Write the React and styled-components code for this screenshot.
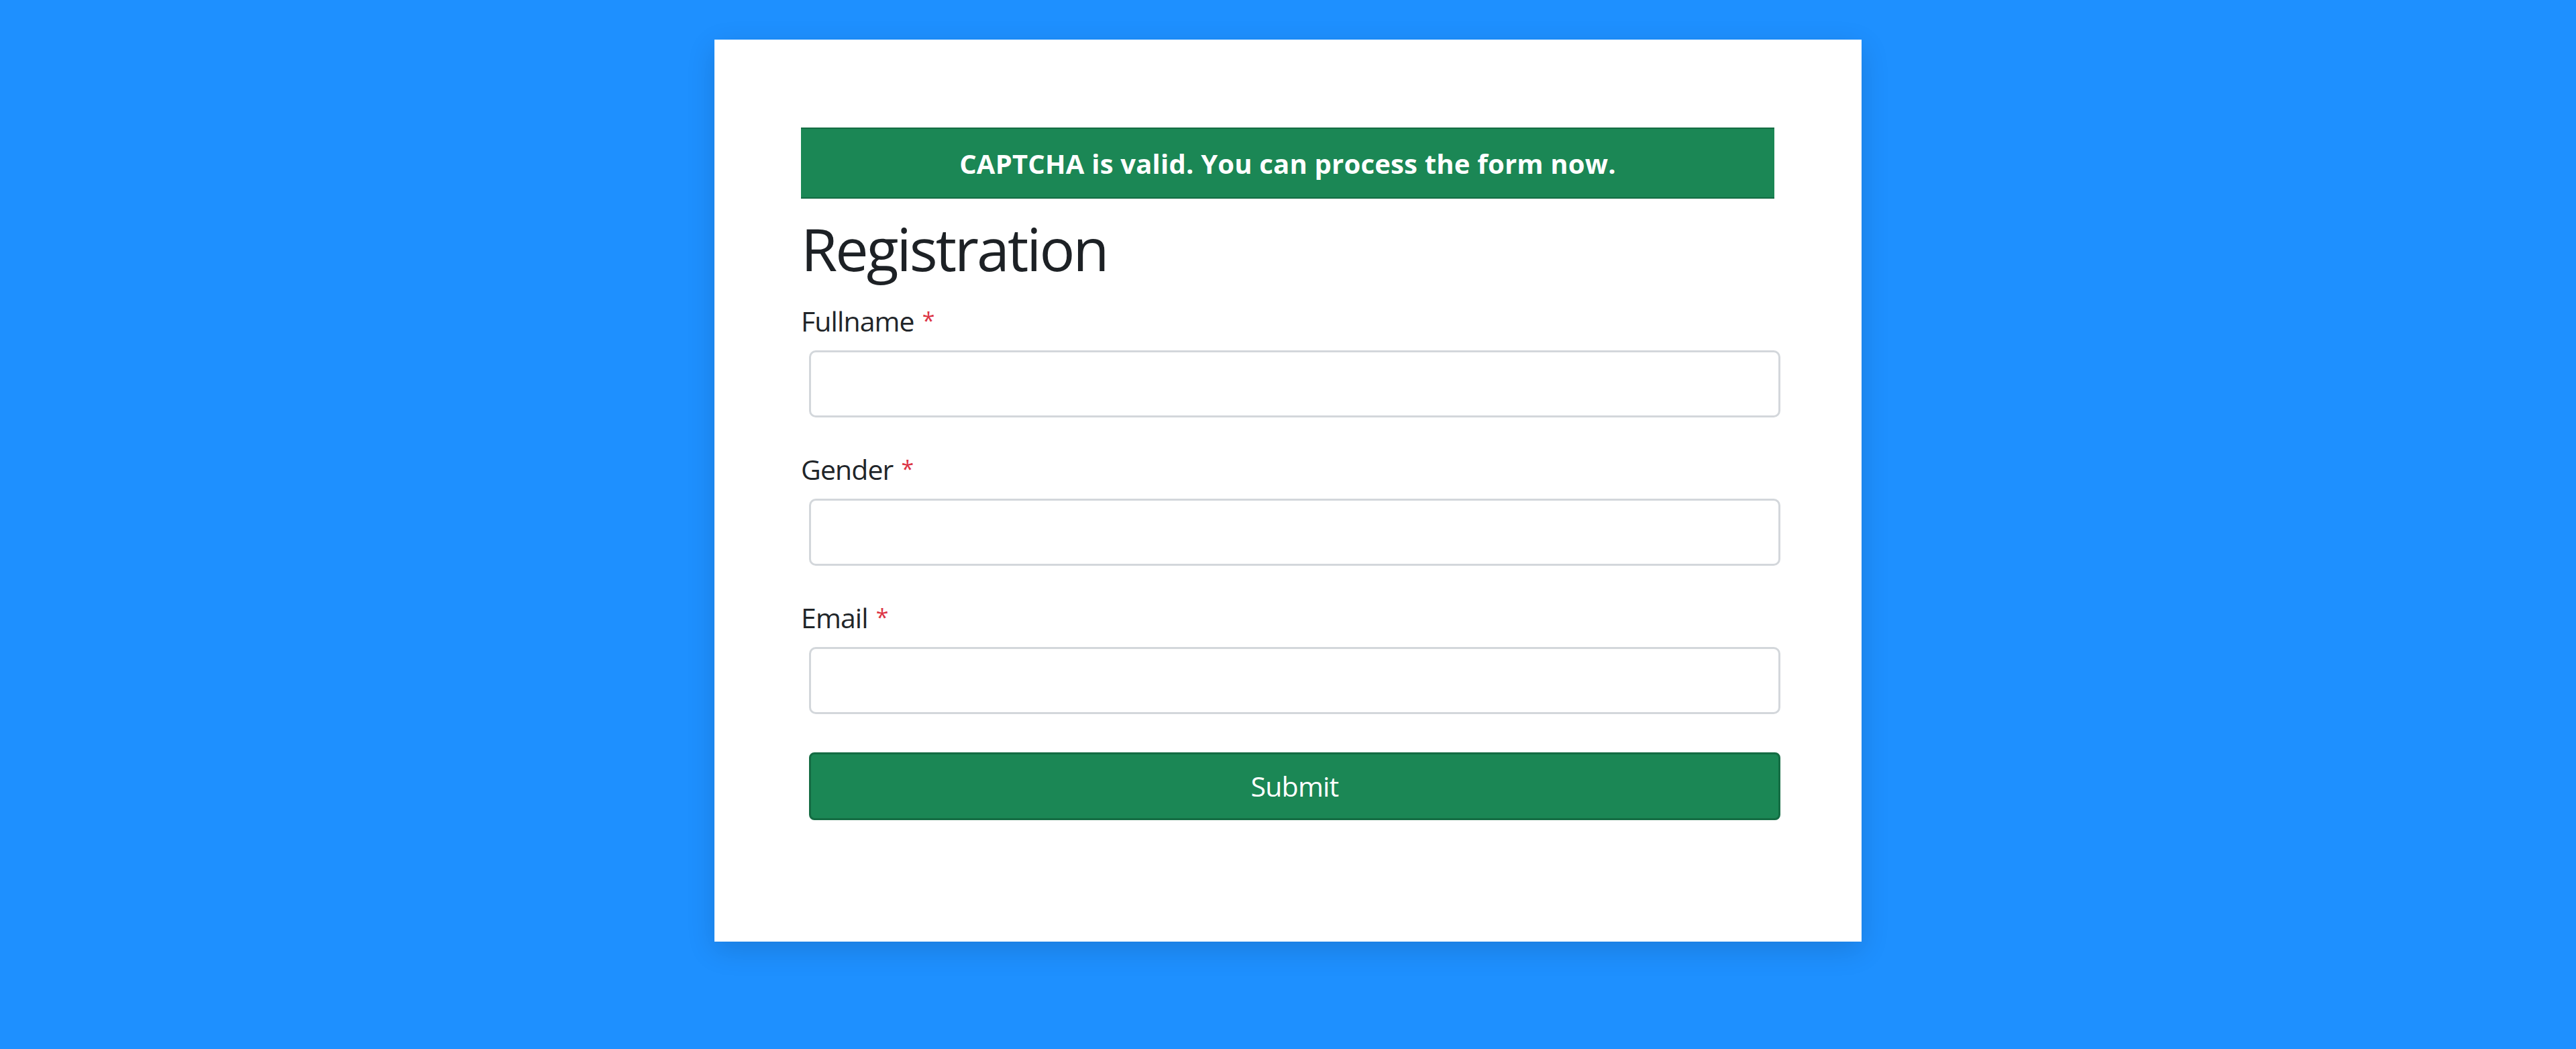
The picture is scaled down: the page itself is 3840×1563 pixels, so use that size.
import React from 'react'
import styled, { createGlobalStyle } from 'styled-components'

const GlobalStyle = createGlobalStyle`
  html, body {
    margin: 0;
    padding: 0;
    background: #1e90ff;
  }
  body {
    font-family: "Open Sans", "Noto Sans", sans-serif;
    color: #212529;
  }
  * { box-sizing: border-box; }
`

const Page = styled.div`
  min-height: 100vh;
  padding-top: 59px;
`

const Card = styled.div`
  width: 1710px;
  height: 1344px;
  margin: 0 auto;
  background: #fff;
  box-shadow: 0 12px 40px rgba(0, 0, 0, 0.14);
  padding: 131px 121px 0 129px;
`

const Alert = styled.div`
  height: 106px;
  margin-right: 9px;
  background: #1b8755;
  border-top: 2px solid #146c43;
  border-bottom: 2px solid #146c43;
  color: #fff;
  font-weight: 700;
  font-size: 40px;
  letter-spacing: 0.2px;
  display: flex;
  align-items: center;
  justify-content: center;
`

const Title = styled.h2`
  margin: 22px 0 21px;
  font-size: 88px;
  font-weight: 400;
  letter-spacing: -3px;
  line-height: 1.2;
  color: #1d2125;
`

const Field = styled.div`
  margin-bottom: 44px;
`

const Label = styled.label`
  display: block;
  font-size: 41px;
  letter-spacing: -0.9px;
  line-height: 64px;
  margin-bottom: 12px;
  color: #212529;
`

const Required = styled.span`
  color: #dc3545;
  margin-left: 12px;
  font-size: 34px;
  vertical-align: 4px;
`

const Input = styled.input`
  display: block;
  margin-left: 12px;
  width: calc(100% - 12px);
  height: 100px;
  border: 3px solid #d3d7db;
  border-radius: 10px;
  background: #fff;
  font: inherit;
  font-size: 43px;
  padding: 0 32px;
  outline: none;
`

const SubmitButton = styled.button`
  display: block;
  margin: 57px 0 0 12px;
  width: calc(100% - 12px);
  height: 101px;
  background: #1b8755;
  border: 3px solid #146c43;
  border-radius: 8px;
  color: #fff;
  font-family: inherit;
  font-size: 41px;
  letter-spacing: -0.8px;
  cursor: pointer;
`

const fields = [
  { id: 'fullname', label: 'Fullname', type: 'text' },
  { id: 'gender', label: 'Gender', type: 'text' },
  { id: 'email', label: 'Email', type: 'email' },
]

export default function App() {
  return (
    <Page>
      <GlobalStyle />
      <Card>
        <Alert>CAPTCHA is valid. You can process the form now.</Alert>
        <Title>Registration</Title>
        <form onSubmit={e => e.preventDefault()}>
          {fields.map(f => (
            <Field key={f.id}>
              <Label htmlFor={f.id}>
                {f.label}<Required>*</Required>
              </Label>
              <Input id={f.id} type={f.type} />
            </Field>
          ))}
          <SubmitButton type="submit">Submit</SubmitButton>
        </form>
      </Card>
    </Page>
  )
}
